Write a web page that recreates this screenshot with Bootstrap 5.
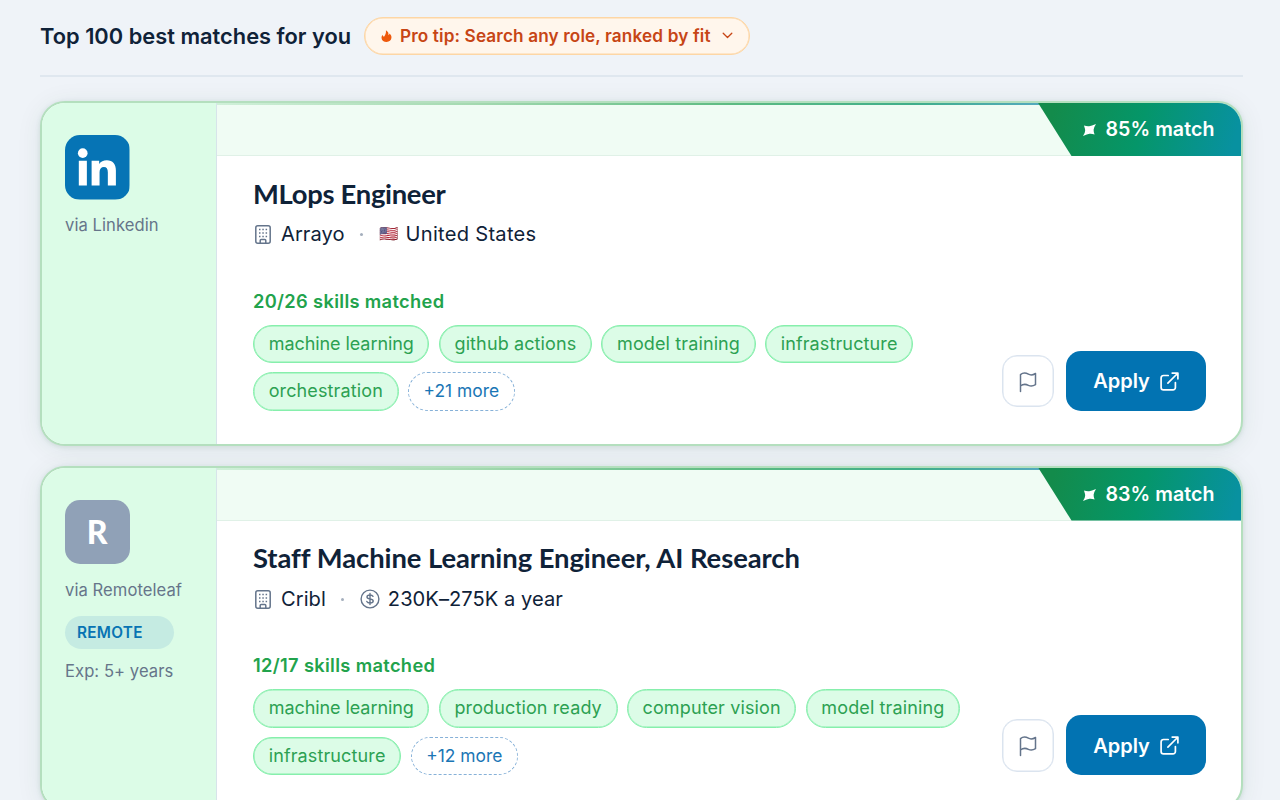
<!DOCTYPE html>
<html lang="en">
<head>
<meta charset="utf-8">
<meta name="viewport" content="width=device-width, initial-scale=1">
<title>Best job matches</title>
<link href="https://cdn.jsdelivr.net/npm/bootstrap@5.3.0/dist/css/bootstrap.min.css" rel="stylesheet">
<style>
  html, body { height: 100%; overflow: hidden; }
  body { background: #eff3f8; color: #0f2238; font-family: Inter, "DM Sans", sans-serif; }
  .page { padding: 16.5px 37px 0 40px; }
  .page-head { height: 60.5px; border-bottom: 2px solid #dfe7ef; margin-bottom: 24px; }
  .page-title { font-size: 21.8px; font-weight: 600; line-height: 39px; letter-spacing: .02px; margin: 0 12px 0 0; width: 312px; white-space: nowrap; }
  .tip { width: 386px; height: 38.5px; padding: 0 16px 0 16px; border: 1px solid #fdd6a5; box-shadow: inset 0 0 0 .5px #fdd6a5; border-radius: 20px; background: #fff6ec; color: #c74515; font-size: 17.2px; font-weight: 600; letter-spacing: .13px; white-space: nowrap; }
  .job { height: 344.5px; margin-bottom: 20px; border: 2px solid #b4dfbe; border-radius: 25px; background: #fff; overflow: hidden; box-shadow: 0 3px 26px rgba(22,80,50,.08), 0 1px 5px rgba(22,100,60,.12); }
  .source { width: 175px; flex: none; padding: 32px 0 0 23px; background: #dcfce7; border-right: 1px solid #d7e4ea; color: #66758a; font-size: 16.6px; line-height: 25px; letter-spacing: .06px; white-space: nowrap; }
  .logo { width: 64.5px; height: 64.5px; border-radius: 15px; margin-bottom: 13.5px; color: #fff; font: 900 32px/64px Lato, sans-serif; letter-spacing: 0; }
  .logo.letter { background: #90a1b7; }
  .remote { width: 109px; height: 33px; margin: 13.5px 0 10px; padding-left: 12px; border-radius: 17px; background: #c5ebe2; color: #0873b3; font-size: 15.3px; font-weight: 600; line-height: 33px; letter-spacing: .3px; }
  .strip { height: 53px; flex: none; background: #f0fcf4; border-bottom: 1px solid #e0f1e7; }
  .strip::before { content: ""; position: absolute; inset: 0 0 auto; height: 2px; background: linear-gradient(90deg, #d0f0d9, #a4d9b0 25%, #5dbb82 50%, #3fae8a 68%, #55a9c0 81%); }
  .match { position: absolute; right: -1px; top: -1px; width: 204.5px; height: 54px; padding: 2px 0 0 45px; clip-path: polygon(0 0, 100% 0, 100% 100%, 34px 100%); background: linear-gradient(105deg, #138b4b 8%, #059669 50%, #0891a0 95%); color: #fff; font-size: 19.6px; font-weight: 600; letter-spacing: .05px; }
  .match svg { margin-right: 10px; }
  .details { padding: 18.5px 35px 31px 36px; }
  .job-title { margin: 0 0 7.5px; font: 700 27.4px/37px Lato, sans-serif; letter-spacing: -.3px; white-space: nowrap; }
  .job-title.long { letter-spacing: -.06px; }
  .meta { height: 31px; font-size: 20.1px; letter-spacing: .05px; }
  .meta svg { flex: none; }
  .meta .place { letter-spacing: .28px; }
  .meta .dot { width: 3px; height: 3px; border-radius: 50%; background: #a5afbd; margin: 0 15.5px; }
  .flag { width: 20px; margin-right: 7px; font-size: 15.5px; letter-spacing: 0; line-height: 1; transform: translateY(-1px); }
  .matched { margin-top: 39.500px; height: 23px; font-size: 18.3px; font-weight: 600; line-height: 23px; color: #22a34c; letter-spacing: .33px; }
  .chips { width: 722px; gap: 9.3px; margin-top: 12px; }
  .chip { height: 38.5px; padding: 0 14.7px; border: 1px solid #86efac; box-shadow: inset 0 0 0 .5px #86efac; border-radius: 20px; background: #dcfce7; color: #2ca152; font-size: 18px; line-height: 36px; letter-spacing: .12px; white-space: nowrap; }
  .chip.tight { letter-spacing: -.07px; }
  .chip.more { border: 1px dashed #86b1d8; box-shadow: none; background: #fff; color: #1a76b5; font-size: 17.4px; letter-spacing: 0; }
  .btn-report { width: 52.5px; height: 52.5px; border: 1px solid #dbe4ef; box-shadow: inset 0 0 0 .5px #dbe4ef; border-radius: 15px; background: #fff; color: #64748b; padding: 0; }
  .btn-apply { width: 140px; height: 60px; border-radius: 15px; background: #0273b2; color: #fff; font-size: 20px; font-weight: 600; gap: 10px; padding: 1px 0 0; border: 0; }
</style>
</head>
<body>
<svg class="d-none">
  <symbol id="i-building" viewBox="0 0 16 19"><rect x=".8" y=".8" width="14.4" height="17.4" rx="2" fill="none" stroke="currentColor" stroke-width="1.5"/><path d="M5.200 18v-2.600q0-.9.9-.9h3.800q.9 0 .9.9V18" fill="none" stroke="currentColor" stroke-width="1.5"/><path d="M4 4.600h1.500M7.300 4.600h1.500M10.600 4.600h1.500M4 8h1.500M7.300 8h1.500M10.600 8h1.500M4 11.400h1.500M7.300 11.400h1.500M10.600 11.400h1.500" stroke="currentColor" stroke-width="1.5"/></symbol>
  <symbol id="i-flag" viewBox="0 0 18 21"><path d="M1.500 19.500V2.600C4.600 0 7.600 1.200 9.400 2.200S13.500 3.300 16.500 1.500V12.700C13.500 14.500 11.200 14.200 9.400 13.300S4.600 11.500 1.500 14" fill="none" stroke="currentColor" stroke-width="1.5" stroke-linecap="round" stroke-linejoin="round"/></symbol>
  <symbol id="i-open" viewBox="0 0 19 19"><path d="M8.200 3.500H3.500a2.400 2.400 0 0 0-2.400 2.400v9.500a2.400 2.400 0 0 0 2.400 2.400h9.500a2.400 2.400 0 0 0 2.400-2.400v-4.800M12.200 1.100h5.700v5.700M17.500 1.500l-9.600 9.600" fill="none" stroke="currentColor" stroke-width="1.7" stroke-linecap="round" stroke-linejoin="round"/></symbol>
  <symbol id="i-spark" viewBox="0 0 12 11"><path d="M0 11Q2 8 2 6.200T.9 1.300Q3.600 2.300 5.700 2T12 0Q9.900 3.300 9.800 5.200T10.700 9.600Q8 8.800 6 9T0 11Z" fill="currentColor"/></symbol>
</svg>
<main class="page">
  <header class="page-head d-flex align-items-start">
    <h1 class="page-title">Top 100 best matches for you</h1>
    <div class="tip d-flex align-items-center">
      <svg width="11" height="14" viewBox="0 0 12 14"><path d="M5.400.6C8 2.200 8.500 4 8 6.200c.9-.4 1.200-1 1.300-1.800C10.800 5.600 11.600 7.200 11.400 9c-.2 2.700-2.400 4.500-5.300 4.500S.7 11.700.6 9.100C.5 7.600 1 6.500 1.900 5.800c.1 1 .6 1.700 1.400 2C4.500 6 5.800 4 5.400.6Z" fill="#ee590c"/></svg>
      <span class="ms-2">Pro tip: Search any role, ranked by fit</span>
      <svg class="ms-auto" width="11" height="7" viewBox="0 0 11 7"><path d="M1.200 1.200l4.300 4.300 4.300-4.300" fill="none" stroke="#c74515" stroke-width="1.300" stroke-linecap="round" stroke-linejoin="round"/></svg>
    </div>
  </header>

  <article class="job d-flex">
    <aside class="source">
      <svg class="logo d-block" viewBox="0 0 64 64"><rect width="64" height="64" fill="#0674b5"/><g fill="#fff"><circle cx="17.600" cy="18" r="4.800"/><path d="M13.700 25.600h8v24.600h-8zM26.400 25.600h7.500v3.100c1.700-2.500 4.200-3.700 7.600-3.700 5.900 0 9 3.700 9 10.200v15h-8V36.900c0-3.400-1.300-5.200-3.900-5.200-2.800 0-4.300 1.900-4.300 5.300v13.200h-7.900z"/></g></svg>
      <div>via Linkedin</div>
    </aside>
    <section class="flex-grow-1 d-flex flex-column position-relative">
      <div class="strip"></div>
      <div class="match d-flex align-items-center"><svg width="13" height="12"><use href="#i-spark"/></svg>85% match</div>
      <div class="details flex-grow-1 d-flex flex-column">
        <h2 class="job-title">MLops Engineer</h2>
        <div class="meta d-flex align-items-center">
          <svg class="me-2" width="20" height="19" color="#64748b"><use href="#i-building"/></svg><span>Arrayo</span><i class="dot"></i><span class="flag">🇺🇸</span><span class="place">United States</span>
        </div>
        <div class="matched">20/26 skills matched</div>
        <div class="d-flex justify-content-between align-items-end">
          <div class="chips d-flex flex-wrap">
            <span class="chip tight">machine learning</span><span class="chip">github actions</span><span class="chip">model training</span><span class="chip">infrastructure</span><span class="chip">orchestration</span><span class="chip more">+21 more</span>
          </div>
          <div class="d-flex align-items-center gap-2">
            <button class="btn btn-report me-1" aria-label="Report"><svg width="18" height="21"><use href="#i-flag"/></svg></button>
            <button class="btn btn-apply d-flex align-items-center justify-content-center"><span>Apply</span><svg width="19" height="19"><use href="#i-open"/></svg></button>
          </div>
        </div>
      </div>
    </section>
  </article>

  <article class="job d-flex">
    <aside class="source">
      <div class="logo letter text-center">R</div>
      <div>via Remoteleaf</div>
      <div class="remote">REMOTE</div>
      <div>Exp: 5+ years</div>
    </aside>
    <section class="flex-grow-1 d-flex flex-column position-relative">
      <div class="strip"></div>
      <div class="match d-flex align-items-center"><svg width="13" height="12"><use href="#i-spark"/></svg>83% match</div>
      <div class="details flex-grow-1 d-flex flex-column">
        <h2 class="job-title long">Staff Machine Learning Engineer, AI Research</h2>
        <div class="meta d-flex align-items-center">
          <svg class="me-2" width="20" height="19" color="#64748b"><use href="#i-building"/></svg><span>Cribl</span><i class="dot"></i><svg class="me-2" width="20" height="20" viewBox="0 0 20 20" fill="none" stroke="#64748b" stroke-width="1.400" stroke-linecap="round"><circle cx="10" cy="10" r="8.900"/><path d="M13 7.300C12.400 6.300 11.400 6 10 6 8.200 6 7 6.700 7 8c0 2.800 6.200 1.200 6.200 4 0 1.300-1.300 2-3.200 2-1.500 0-2.700-.5-3.200-1.500M10 4.400v11.200"/></svg><span>230K–275K a year</span>
        </div>
        <div class="matched">12/17 skills matched</div>
        <div class="d-flex justify-content-between align-items-end">
          <div class="chips d-flex flex-wrap">
            <span class="chip tight">machine learning</span><span class="chip">production ready</span><span class="chip">computer vision</span><span class="chip">model training</span><span class="chip">infrastructure</span><span class="chip more">+12 more</span>
          </div>
          <div class="d-flex align-items-center gap-2">
            <button class="btn btn-report me-1" aria-label="Report"><svg width="18" height="21"><use href="#i-flag"/></svg></button>
            <button class="btn btn-apply d-flex align-items-center justify-content-center"><span>Apply</span><svg width="19" height="19"><use href="#i-open"/></svg></button>
          </div>
        </div>
      </div>
    </section>
  </article>
</main>
</body>
</html>
